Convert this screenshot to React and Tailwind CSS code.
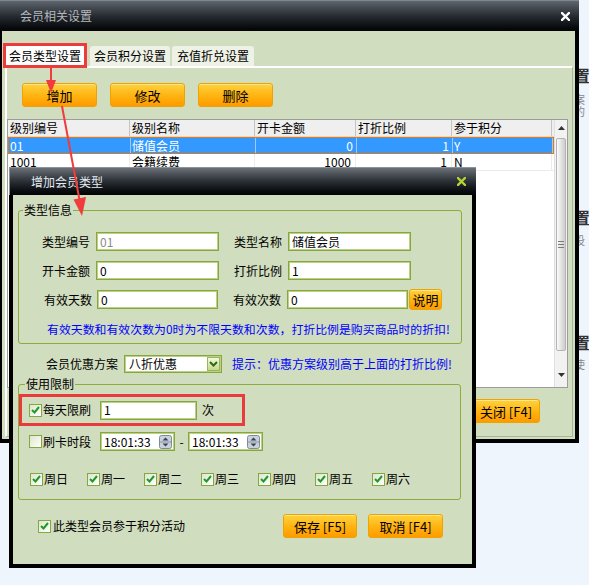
import React from "react";

function XIcon({ className = "" }) {
  return (
    <svg width="9" height="9" viewBox="0 0 9 9" className={className}>
      <path d="M1 1 L8 8 M8 1 L1 8" stroke="currentColor" strokeWidth="2.4" strokeLinecap="square" />
    </svg>
  );
}

function OrangeButton({ children, className = "" }) {
  return (
    <div
      className={
        "flex items-center justify-center rounded-[3px] border border-[#eda400] bg-linear-to-b from-[#ffd23a] via-[#ffb512] to-[#ff9a00] text-[13px] leading-none text-black shadow-[inset_0_1px_0_#ffe58a] " +
        className
      }
    >
      {children}
    </div>
  );
}

function Check({ checked = true }) {
  return (
    <span className="flex h-[13px] w-[13px] shrink-0 items-center justify-center border border-[#82a83e] bg-linear-to-br from-[#dfe5cf] to-white">
      {checked && (
        <svg width="9" height="8" viewBox="0 0 9 8">
          <path d="M1 4 L3.5 6.5 L8 1" fill="none" stroke="#1f9a2a" strokeWidth="2" />
        </svg>
      )}
    </span>
  );
}

function Field({ value, className = "", muted = false }) {
  return (
    <div
      className={
        "flex h-[19px] items-center border border-[#86a83a] bg-white pl-[3px] leading-none shadow-[inset_0_0_0_1px_#bcd187] " +
        (muted ? "text-[#8a8a8a] " : "text-black ") +
        className
      }
    >
      {value}
    </div>
  );
}

function TimeField() {
  return (
    <div className="flex h-[19px] w-[75px] items-center border border-[#86a83a] bg-white pl-[3px] leading-none shadow-[inset_0_0_0_1px_#bcd187]">
      <span className="flex-1">18:01:33</span>
      <svg width="13" height="14" viewBox="0 0 13 14" className="mr-[2px]">
        <rect x="0.5" y="0.5" width="12" height="13" rx="2" fill="#c9d2dc" stroke="#7d8a98" />
        <line x1="1" y1="7" x2="12" y2="7" stroke="#8a96a4" />
        <path d="M3.5 5.5 L6.5 2.5 L9.5 5.5 Z" fill="#3a4450" />
        <path d="M3.5 8.5 L6.5 11.5 L9.5 8.5 Z" fill="#3a4450" />
      </svg>
    </div>
  );
}

const cols = ["w-[122px]", "w-[125px]", "w-[101px]", "w-[96px]", "w-[100px]"];
const header = ["级别编号", "级别名称", "开卡金额", "打折比例", "参于积分"];
const rows = [
  ["01", "储值会员", "0", "1", "Y"],
  ["1001", "会籍续费", "1000", "1", "N"],
];
const rightAligned = [false, false, true, true, false];

function MemberTable() {
  return (
    <div className="flex h-[269px] w-[561px] border border-[#9c9c9c] bg-white">
      <div className="flex flex-1 flex-col">
        <div className="flex h-[17px] shrink-0 border-b border-[#d8d8d8] bg-[#efefef]">
          {header.map((h, i) => (
            <div key={h} className={"flex items-center border-r border-[#c4c4c4] pl-[2px] leading-none " + cols[i]}>
              {h}
            </div>
          ))}
        </div>
        <div className="flex h-[17px] shrink-0 border border-[#e2790e] bg-[#3399ff] text-white">
          {rows[0].map((c, i) => (
            <div
              key={i}
              className={
                "flex items-center border-r border-[#9fcaf7] leading-none " +
                (rightAligned[i] ? "justify-end pr-[3px] " : "pl-[1px] ") +
                cols[i]
              }
            >
              {c}
            </div>
          ))}
        </div>
        <div className="flex h-[17px] shrink-0 border-b border-[#ececec]">
          {rows[1].map((c, i) => (
            <div
              key={i}
              className={
                "flex items-center border-r border-[#ececec] leading-none " +
                (rightAligned[i] ? "justify-end pr-[4px] " : "pl-[2px] ") +
                cols[i]
              }
            >
              {c}
            </div>
          ))}
        </div>
      </div>
      <div className="flex w-[15px] flex-col border-l border-[#e0e0e0] bg-[#f2f2f2]">
        <div className="flex h-[16px] items-center justify-center">
          <svg width="7" height="4" viewBox="0 0 7 4">
            <path d="M0 4 L3.5 0 L7 4 Z" fill="#333" />
          </svg>
        </div>
        <div className="mx-[1px] mt-[2px] flex h-[213px] flex-col items-center justify-center gap-[2px] rounded-[2px] border border-[#b4b4b4] bg-linear-to-r from-[#fbfbfb] to-[#cdcdcd]">
          <span className="h-px w-[6px] bg-[#7a7a7a]" />
          <span className="h-px w-[6px] bg-[#7a7a7a]" />
          <span className="h-px w-[6px] bg-[#7a7a7a]" />
        </div>
        <div className="flex-1" />
        <div className="mb-[4px] flex h-[16px] items-center justify-center">
          <svg width="7" height="4" viewBox="0 0 7 4">
            <path d="M0 0 L3.5 4 L7 0 Z" fill="#333" />
          </svg>
        </div>
      </div>
    </div>
  );
}

function MainWindow() {
  return (
    <div className="relative z-10 flex h-[443px] w-[579px] flex-col bg-black">
      <div className="flex h-[31px] shrink-0 items-center justify-between border-t border-[#80868e] bg-linear-to-b from-[#60666e] via-[#272c32] to-[#030405] pl-[20px] pr-[9px]">
        <span className="leading-none text-[#b4b8bc]">会员相关设置</span>
        <XIcon className="text-white" />
      </div>
      <div className="mb-[4px] ml-[2px] mr-[4px] flex flex-1 flex-col bg-[#d0ddbe]">
        <div className="relative z-10 mt-[12px] flex h-[25px] items-end pl-[1px]">
          <div className="flex h-[25px] items-center border-[3px] border-[#ec3b3b] bg-white px-[3px] leading-none">
            会员类型设置
          </div>
          <div className="mb-[2px] ml-[3px] flex h-[20px] w-[80px] items-center justify-center rounded-t-[3px] bg-[#eef1e5] leading-none">
            会员积分设置
          </div>
          <div className="mb-[2px] ml-[2px] flex h-[20px] w-[82px] items-center justify-center rounded-t-[3px] bg-[#eef1e5] leading-none">
            充值折兑设置
          </div>
        </div>
        <div className="-mt-[2px] mb-[2px] ml-[3px] mr-[2px] flex flex-1 flex-col border-b border-l-2 border-r border-t-2 border-b-[#a9b39a] border-l-white border-r-[#a9b39a] border-t-white">
          <div className="mt-[15px] flex gap-[13px] pl-[15px]">
            <OrangeButton className="h-[24px] w-[75px]">增加</OrangeButton>
            <OrangeButton className="h-[24px] w-[75px]">修改</OrangeButton>
            <OrangeButton className="h-[24px] w-[75px]">删除</OrangeButton>
          </div>
          <div className="mt-[12px]">
            <MemberTable />
          </div>
          <div className="mt-[11px] flex justify-end pr-[32px]">
            <OrangeButton className="h-[24px] w-[68px]">关闭 [F4]</OrangeButton>
          </div>
        </div>
      </div>
    </div>
  );
}

const weekdays = ["周日", "周一", "周二", "周三", "周四", "周五", "周六"];

function AddTypeDialog() {
  return (
    <div className="absolute left-[9px] top-[167px] z-20 flex h-[401px] w-[467px] flex-col bg-black">
      <div className="flex h-[28px] shrink-0 items-center justify-between border-l border-t border-[#8c9298] bg-linear-to-b from-[#6a7077] via-[#2a2f35] to-[#020304] pl-[21px] pr-[10px]">
        <span className="leading-none text-[#e2eaf2]">增加会员类型</span>
        <XIcon className="text-[#b5d235]" />
      </div>
      <div className="mx-[4px] mb-[4px] flex flex-1 flex-col bg-[#d0ddbe]">
        {/* 类型信息 */}
        <div className="relative ml-[5px] mt-[15px] h-[134px] w-[444px] shrink-0 rounded-[3px] border border-[#8aad3c]">
          <span className="absolute -top-[9px] left-[4px] bg-[#d0ddbe] px-[1px] leading-[16px]">类型信息</span>
          <div className="flex flex-col gap-[10px] pt-[21px]">
            <div className="flex h-[19px] items-center">
              <span className="w-[71px] text-right">类型编号</span>
              <Field value="01" muted className="ml-[6px] w-[123px]" />
              <span className="w-[63px] text-right">类型名称</span>
              <Field value="储值会员" className="ml-[6px] w-[123px]" />
            </div>
            <div className="flex h-[19px] items-center">
              <span className="w-[71px] text-right">开卡金额</span>
              <Field value="0" className="ml-[6px] w-[123px]" />
              <span className="w-[63px] text-right">打折比例</span>
              <Field value="1" className="ml-[6px] w-[123px]" />
            </div>
            <div className="flex h-[19px] items-center">
              <span className="w-[73px] text-right">有效天数</span>
              <Field value="0" className="ml-[5px] w-[121px]" />
              <span className="w-[63px] text-right">有效次数</span>
              <Field value="0" className="ml-[6px] w-[121px]" />
              <OrangeButton className="ml-[1px] h-[21px] w-[33px]">说明</OrangeButton>
            </div>
          </div>
          <p className="mt-[12px] whitespace-nowrap pl-[28px] text-[11.9px] leading-[16px] text-[#0000ff]">
            有效天数和有效次数为0时为不限天数和次数，打折比例是购买商品时的折扣!
          </p>
        </div>

        {/* 会员优惠方案 */}
        <div className="mt-[11px] flex h-[18px] shrink-0 items-center">
          <span className="w-[105px] text-right">会员优惠方案</span>
          <div className="ml-[6px] flex h-[18px] w-[98px] items-center border border-[#86a83a] bg-white pl-[4px] leading-none shadow-[inset_0_0_0_1px_#bcd187]">
            <span className="flex-1">八折优惠</span>
            <span className="mr-[1px] flex h-[14px] w-[13px] items-center justify-center border border-[#9ab560] bg-linear-to-b from-[#f2f8dc] to-[#c6da88]">
              <svg width="9" height="6" viewBox="0 0 9 6">
                <path d="M1 1 L4.5 4.5 L8 1" fill="none" stroke="#2f6a12" strokeWidth="2" />
              </svg>
            </span>
          </div>
          <span className="ml-[10px] whitespace-nowrap text-[#0000ff]">提示：优惠方案级别高于上面的打折比例!</span>
        </div>

        {/* 使用限制 */}
        <div className="relative ml-[5px] mt-[11px] h-[116px] w-[443px] shrink-0 rounded-[3px] border border-[#8aad3c]">
          <span className="absolute -top-[9px] left-[6px] bg-[#d0ddbe] px-[1px] leading-[16px]">使用限制</span>
          <div className="mt-[9px] flex h-[32px] w-[226px] items-center border-[3px] border-[#e93b3b] pl-[7px]">
            <Check />
            <span className="ml-[1px]">每天限刷</span>
            <Field value="1" className="ml-[9px] w-[97px]" />
            <span className="ml-[5px]">次</span>
          </div>
          <div className="mt-[6px] flex h-[19px] items-center pl-[10px]">
            <Check checked={false} />
            <span className="ml-[1px]">刷卡时段</span>
            <div className="ml-[9px]">
              <TimeField />
            </div>
            <span className="w-[13px] text-center">-</span>
            <TimeField />
          </div>
          <div className="mt-[20px] flex h-[16px] items-center pl-[11px]">
            {weekdays.map((d) => (
              <div key={d} className="flex w-[57px] items-center">
                <Check />
                <span className="ml-[1px]">{d}</span>
              </div>
            ))}
          </div>
        </div>

        <div className="mt-[14px] flex h-[24px] shrink-0 items-center pl-[25px] pr-[29px]">
          <Check />
          <span className="ml-[2px]">此类型会员参于积分活动</span>
          <OrangeButton className="ml-auto h-[24px] w-[74px]">保存 [F5]</OrangeButton>
          <OrangeButton className="ml-[11px] h-[24px] w-[75px]">取消 [F4]</OrangeButton>
        </div>
      </div>
    </div>
  );
}

function BackFragments() {
  return (
    <div className="absolute left-[574px] top-0 z-0 flex flex-col">
      <span className="mt-[67px] text-[16px] font-bold leading-[16px] text-[#333]">置</span>
      <span className="mt-[10px] text-[11px] leading-[12px] text-[#888]">案的</span>
      <span className="mt-[92px] text-[16px] font-bold leading-[16px] text-[#333]">置</span>
      <span className="mt-[9px] text-[11px] leading-[12px] text-[#888]">设</span>
      <span className="mt-[88px] text-[16px] font-bold leading-[16px] text-[#333]">置</span>
      <span className="mt-[8px] text-[11px] leading-[12px] text-[#888]">使</span>
    </div>
  );
}

function Arrows() {
  return (
    <svg className="pointer-events-none absolute left-0 top-0 z-30" width="589" height="585" viewBox="0 0 589 585">
      <line x1="51" y1="66" x2="51" y2="82" stroke="#f03c3c" strokeWidth="2" />
      <polygon points="46,80 56,80 51,93" fill="#f03c3c" />
      <line x1="62" y1="106" x2="79.5" y2="200" stroke="#f03c3c" strokeWidth="2" />
      <polygon points="73.5,199.5 86,197 82,216" fill="#f03c3c" />
    </svg>
  );
}

export default function App() {
  return (
    <div className="relative h-[585px] w-[589px] overflow-hidden bg-[#eff5fd] font-['Noto_Sans_CJK_SC','Noto_Sans',sans-serif] text-[12px] text-black">
      <BackFragments />
      <MainWindow />
      <AddTypeDialog />
      <Arrows />
    </div>
  );
}
